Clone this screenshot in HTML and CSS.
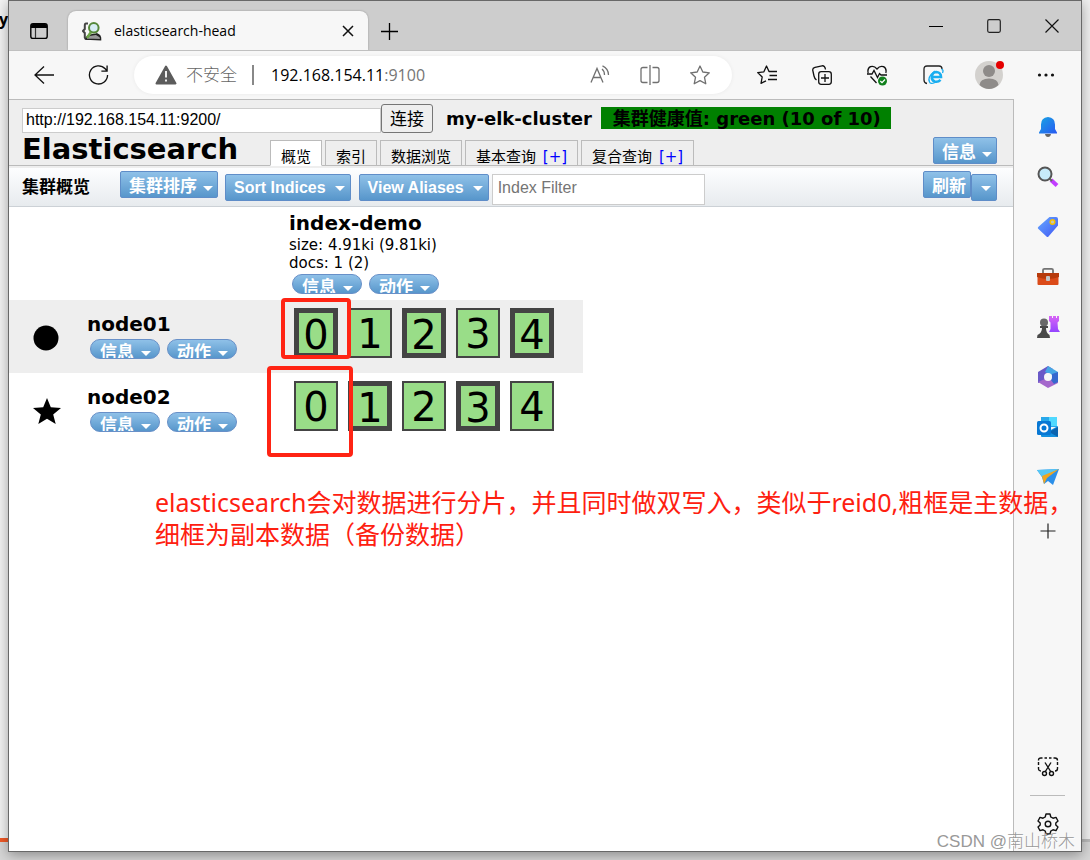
FILE: index.html
```html
<!DOCTYPE html>
<html lang="zh-CN">
<head>
<meta charset="utf-8">
<title>elasticsearch-head</title>
<link rel="stylesheet" href="styles.css">
</head>
<body>
<div class="desktop">
<span class="behind-text">y</span>
<div class="window">
  <header class="titlebar">
    <button class="icon-btn" aria-label="标签页操作"><svg width="20" height="20" viewBox="0 0 20 20" fill="none"><rect x="1.8" y="2.8" width="16.4" height="14.6" rx="2.2" stroke="#000" stroke-width="1.4"/><path d="M2 4.5Q2 3 4 3H16Q18 3 18 4.5V7H2Z" fill="#000"/><path d="M6.5 7v10" stroke="#333" stroke-width="1.2"/></svg></button>
    <div class="tab">
      <svg width="20" height="20" viewBox="0 0 20 20" fill="none"><path d="M6 2.500H4Q2.800 2.500 2.800 4.500V8L1 10L2.800 12V16.500Q3 18 4.500 18H7" stroke="#444" stroke-width="2"/><path d="M4 18.200Q4.500 14.500 9 14L15 13Q19 14.500 18.600 18.800Z" fill="#999" stroke="#222" stroke-width="1.400"/><path d="M14 13L18 15.500" stroke="#222" stroke-width="1.600"/><circle cx="11.800" cy="6.800" r="4.800" fill="#d7edf5" stroke="#55883a" stroke-width="2"/><path d="M9 11L5 17" stroke="#6ca447" stroke-width="2.600"/></svg>
      <span class="tab-title">elasticsearch-head</span>
      <button class="icon-btn" aria-label="关闭标签页"><svg width="12" height="12" viewBox="0 0 12 12"><path d="M1 1L11 11M11 1L1 11" stroke="#111" stroke-width="1.500"/></svg></button>
    </div>
    <button class="icon-btn" aria-label="新建标签页"><svg width="18" height="18" viewBox="0 0 18 18"><path d="M9.500 1V18M1 9.500H18" stroke="#000" stroke-width="1.300"/></svg></button>
    <div class="win-controls">
      <button aria-label="最小化"><svg width="14" height="14" viewBox="0 0 14 14"><path d="M0 7.500H14" stroke="#000"/></svg></button>
      <button aria-label="最大化"><svg width="14" height="14" viewBox="0 0 14 14"><rect x=".7" y=".7" width="12.600" height="12.600" rx="1.500" fill="none" stroke="#222" stroke-width="1.200"/></svg></button>
      <button aria-label="关闭"><svg width="14" height="14" viewBox="0 0 14 14"><path d="M.5 .5L13.500 13.500M13.500 .5L.5 13.500" stroke="#111" stroke-width="1.200"/></svg></button>
    </div>
  </header>

  <nav class="browser-bar">
    <div class="nav-group">
      <button class="icon-btn" aria-label="返回"><svg width="20" height="20" viewBox="0 0 20 20" fill="none" stroke="#111" stroke-width="1.300"><path d="M20 10H1M10 1.500L1 10L10 18.500"/></svg></button>
      <button class="icon-btn" aria-label="刷新页面"><svg width="21" height="22" viewBox="0 0 22 22" fill="none" stroke="#111" stroke-width="1.400"><path d="M20.500 11a9.500 9.500 0 1 1-2.500-6.500L20 6.800M20 1V7H14"/></svg></button>
    </div>
    <div class="omnibox">
      <svg width="22" height="20" viewBox="0 0 22 20"><path d="M11 1.500L20.500 18.500H1.500Z" fill="#5c5c5c" stroke="#5c5c5c" stroke-width="2" stroke-linejoin="round"/><path d="M11 6V12.500M11 14.500V16.500" stroke="#fff" stroke-width="1.800"/></svg>
      <span class="unsafe">不安全</span>
      <span class="address">192.168.154.11<span class="port">:9100</span></span>
      <div class="omni-icons">
        <button class="icon-btn" aria-label="大声朗读"><svg width="20" height="20" viewBox="0 0 20 20" fill="none" stroke="#707070" stroke-width="1.300"><path d="M1 17.500L7 3.500L13 17.500M3.500 12.500H10.500M12 4Q14.500 6 14.500 10M12.500 .8Q18.500 3.500 18.500 10"/></svg></button>
        <button class="icon-btn" aria-label="分屏"><svg width="20" height="20" viewBox="0 0 20 20" fill="none" stroke="#707070" stroke-width="1.300"><path d="M7.500 2.500H3Q1 2.500 1 4.500V15.500Q1 17.500 3 17.500H7.500M12.500 2.500H17Q19 2.500 19 4.500V15.500Q19 17.500 17 17.500H12.500M10 0V20"/></svg></button>
        <button class="icon-btn" aria-label="收藏此页"><svg width="20" height="20" viewBox="0 0 20 20" fill="none" stroke="#707070" stroke-width="1.300" stroke-linejoin="round"><path d="M10 1L12.800 7L19.300 7.800L14.500 12.300L15.800 18.800L10 15.600L4.200 18.800L5.500 12.300L.7 7.800L7.200 7Z"/></svg></button>
      </div>
    </div>
    <div class="action-group">
      <button class="icon-btn" aria-label="收藏夹"><svg width="20" height="20" viewBox="0 0 20 20" fill="none" stroke="#111" stroke-width="1.300"><path d="M13 6.500H12L9.500 1L6.900 6.800L.7 7.600L5.200 12L4 18.300L9 15.800M12.500 6.500H20M12.500 10.500H20M11 14.500H20" stroke-linejoin="round"/></svg></button>
      <button class="icon-btn" aria-label="集锦"><svg width="20" height="20" viewBox="0 0 20 20" fill="none" stroke="#111" stroke-width="1.300"><rect x="6.700" y="6.700" width="12.600" height="12.600" rx="2.500"/><path d="M13 9V17M9 13H17M4.500 15Q2.500 13.500 2 11L.8 5.500Q.3 3 3 2.300L10 .8Q12.800 .3 13.500 4.500"/></svg></button>
      <button class="icon-btn" aria-label="浏览器概要"><svg width="21" height="21" viewBox="0 0 21 21" fill="none" stroke="#111" stroke-width="1.300"><path d="M1.200 8Q0 3.500 3.500 1.700Q7 .3 10 4Q13 .3 16.500 1.700Q20 3.500 18.800 8M0 9H5L7 5.500L10.500 12.500L12.500 8.500L14 10H20M3.500 11.500L9.500 18"/><circle cx="15.500" cy="16" r="4.500" fill="#10801c" stroke="none"/><path d="M13.300 16L15 17.600L18 14.500" stroke="#fff"/></svg></button>
      <button class="icon-btn" aria-label="IE 模式"><svg width="21" height="20" viewBox="0 0 21 20" fill="none"><path d="M4 18.500Q1 18 1 15V4Q1 1 4 1H16Q19 1 19 4" stroke="#222" stroke-width="1.300"/><path d="M17.500 14.800Q15 17.500 11.500 16.500Q8.500 15 8.800 11.500Q9.500 7 13.500 7Q18 7.500 18 12H9" stroke="#1aaef0" stroke-width="2.600"/><path d="M18.500 4.500Q21 4.500 19.500 8M12 6Q4 12 6.500 17Q7.500 19.500 12 17.500" stroke="#1aaef0" stroke-width="1.300"/></svg></button>
      <button class="icon-btn avatar" aria-label="个人资料"><svg width="29" height="30" viewBox="0 0 29 30"><circle cx="14" cy="16" r="14" fill="#d3d1ce"/><circle cx="14" cy="12" r="6" fill="#8e8b89"/><path d="M4.500 26Q5 19.500 14 19.500Q23 19.500 23.500 26Q19 30 14 30Q9 30 4.500 26Z" fill="#8e8b89"/><circle cx="25" cy="6" r="4" fill="#e50000"/></svg></button>
      <button class="icon-btn" aria-label="更多"><svg width="20" height="20" viewBox="0 0 20 20" fill="#111"><circle cx="3.500" cy="10" r="1.600"/><circle cx="10" cy="10" r="1.600"/><circle cx="16.500" cy="10" r="1.600"/></svg></button>
    </div>
  </nav>

  <div class="body-row">
    <main class="page">
      <section class="app-header">
        <form class="connect" onsubmit="return false">
          <input class="url" type="text" aria-label="集群地址" value="http://192.168.154.11:9200/">
          <button class="connect-btn">连接</button>
          <strong class="cluster">my-elk-cluster</strong>
          <strong class="health">集群健康值: green (10 of 10)</strong>
        </form>
        <div class="tabs-row">
          <h1>Elasticsearch</h1>
          <div class="tabs">
            <button class="app-tab active">概览</button>
            <button class="app-tab">索引</button>
            <button class="app-tab">数据浏览</button>
            <button class="app-tab">基本查询 <span class="plus">[+]</span></button>
            <button class="app-tab">复合查询 <span class="plus">[+]</span></button>
          </div>
          <button class="btn info">信息<i class="caret"></i></button>
        </div>
      </section>
      <section class="toolbar">
        <h2>集群概览</h2>
        <button class="btn">集群排序<i class="caret"></i></button>
        <button class="btn low">Sort Indices<i class="caret"></i></button>
        <button class="btn low">View Aliases<i class="caret"></i></button>
        <input class="filter" type="text" aria-label="Index Filter" placeholder="Index Filter">
        <div class="refresh"><button class="btn">刷新</button><button class="btn low" aria-label="刷新选项"><i class="caret"></i></button></div>
      </section>
      <table class="cluster-table">
        <thead>
          <tr>
            <td></td><td></td>
            <th>
              <div class="name">index-demo</div>
              <div class="stat">size: 4.91ki (9.81ki)</div>
              <div class="stat">docs: 1 (2)</div>
              <div class="pills"><button class="pill">信息<i class="caret"></i></button><button class="pill">动作<i class="caret"></i></button></div>
            </th>
          </tr>
        </thead>
        <tbody>
          <tr class="shaded">
            <td class="mark"><svg width="26" height="26" viewBox="0 0 26 26"><circle cx="13" cy="13" r="12.500"/></svg></td>
            <td class="node"><div class="name">node01</div><div class="pills"><button class="pill">信息<i class="caret"></i></button><button class="pill">动作<i class="caret"></i></button></div></td>
            <td class="shard-cell"><div class="shards"><span class="shard primary">0</span><span class="shard">1</span><span class="shard primary">2</span><span class="shard">3</span><span class="shard primary">4</span></div></td>
          </tr>
          <tr>
            <td class="mark"><svg width="28" height="26" viewBox="0 0 28 26"><path d="M14 0L17.800 9.200L28 10L20.200 16.500L22.700 26L14 20.800L5.300 26L7.800 16.500L0 10L10.200 9.200Z"/></svg></td>
            <td class="node"><div class="name">node02</div><div class="pills"><button class="pill">信息<i class="caret"></i></button><button class="pill">动作<i class="caret"></i></button></div></td>
            <td class="shard-cell"><div class="shards"><span class="shard">0</span><span class="shard primary">1</span><span class="shard">2</span><span class="shard primary">3</span><span class="shard">4</span></div></td>
          </tr>
        </tbody>
      </table>
    </main>

    <aside class="sidebar">
      <button class="icon-btn" aria-label="通知"><svg width="22" height="22" viewBox="0 0 22 22"><defs><linearGradient id="bell" x2="1" y2="1"><stop stop-color="#18a5e3"/><stop offset="1" stop-color="#2858f2"/></linearGradient><linearGradient id="tag" x2="1" y2="1"><stop stop-color="#67aaff"/><stop offset="1" stop-color="#4057f4"/></linearGradient><linearGradient id="rook" x2="0" y2="1"><stop stop-color="#d865f5"/><stop offset="1" stop-color="#9445ff"/></linearGradient></defs><path d="M8 18H14Q13.500 21 11 21Q8.500 21 8 18Z" fill="#666"/><path d="M11 1Q18 1.500 18 8.500V13L20 16.500V17.500H2V16.500L4 13V8.500Q4 1.500 11 1Z" fill="url(#bell)"/></svg></button>
      <button class="icon-btn" aria-label="搜索"><svg width="22" height="22" viewBox="0 0 22 22"><path d="M14 14L20 19.500" stroke="#c23dff" stroke-width="4"/><path d="M12 12L15 15" stroke="#666" stroke-width="2"/><circle cx="8" cy="8" r="6.500" fill="#c7ebfa" stroke="#555" stroke-width="2"/></svg></button>
      <button class="icon-btn" aria-label="购物"><svg width="22" height="22" viewBox="0 0 22 22"><path d="M12.500 1H19Q21 1 21 3V9.500L11.500 20.500Q10.500 21.500 9.500 20.500L1.200 12.800Q.3 12 1.200 11Z" fill="url(#tag)"/><circle cx="15.500" cy="6" r="2.300" fill="#c9c8ad" stroke="#f6c000" stroke-width="1.500"/></svg></button>
      <button class="icon-btn" aria-label="工具"><svg width="24" height="22" viewBox="0 0 24 22"><path d="M7 8V4Q7 2.800 8.500 2.800H15.500Q17 2.800 17 4V8" fill="none" stroke="#737373" stroke-width="1.800"/><rect x="1.500" y="10" width="21" height="9" rx="1" fill="#db4b19"/><path d="M1 7H23V11Q12 15 1 11Z" fill="#b73b0c"/><rect x="10" y="10" width="4" height="5" rx="1" fill="#c2c5c7"/></svg></button>
      <button class="icon-btn" aria-label="游戏"><svg width="24" height="24" viewBox="0 0 24 24"><path d="M13 1H16V3H17V1H20V3H21V1H23V6L21.500 7.500L22 14L24 17H13L14.500 14V7.500L13 6Z" fill="url(#rook)"/><circle cx="8" cy="7.500" r="4" fill="#686868"/><path d="M4 11H12V13H10Q10 18 13.500 20L14 23H1L1.500 20Q6 18 6 13H4Z" fill="#494949"/></svg></button>
      <button class="icon-btn" aria-label="Microsoft 365"><svg width="22" height="22" viewBox="0 0 22 22"><path d="M1 6L11 0L16 3L9 8L8 15L1 17Z" fill="#6959c7"/><path d="M11 0L21 6V17L15 14V9L8 6Z" fill="#47a7e5"/><path d="M1 16L8 13L13 14L21 10V17L11 22Z" fill="#a568cc"/><path d="M15 8L21 6V16L17 18L14 14Z" fill="#3668ce"/><circle cx="11" cy="11" r="4" fill="#f7f7f7"/></svg></button>
      <button class="icon-btn" aria-label="Outlook"><svg width="22" height="22" viewBox="0 0 22 22"><rect x="4" y="1" width="16" height="10" fill="#28a8ea"/><path d="M12 1H20V10H12Z" fill="#50d9ff"/><path d="M4 10L12 15L21 10V20Q21 21 20 21H5Q4 21 4 20Z" fill="#1490df"/><path d="M21 11V21L12 16Z" fill="#0b63af"/><rect x="0" y="5" width="14" height="14" rx="1.500" fill="#0878d4"/><circle cx="7" cy="12" r="3.500" fill="none" stroke="#fff" stroke-width="2"/></svg></button>
      <button class="icon-btn" aria-label="Drop"><svg width="22" height="22" viewBox="0 0 22 22"><path d="M0 4L22 3L16 19L11 15L7 18L5 11Z" fill="#2b8fe9"/><path d="M0 4L22 3L5 11Z" fill="#55c7f5"/><path d="M22 3L5 10L7 18L10 12Z" fill="#efa622"/></svg></button>
      <button class="icon-btn add" aria-label="添加"><svg width="16" height="16" viewBox="0 0 16 16"><path d="M8 .5V15.500M.5 8H15.500" stroke="#222" stroke-width="1.200"/></svg></button>
      <div class="side-bottom">
        <button class="icon-btn" aria-label="网页捕获"><svg width="22" height="22" viewBox="0 0 22 22" fill="none" stroke="#111" stroke-width="1.400"><path d="M4 15Q1.500 15 1.500 12.500V11M1.500 9V6M1.500 4.500Q1.500 2 4 2H5.500M7.500 2H10M12 2H14.500M16.500 2H18Q20.500 2 20.500 4.500M20.500 6V9M20.500 11V12.500Q20.500 15 18 15"/><path d="M8 6.500L14 16M14 6.500L8 16"/><circle cx="7.500" cy="17.500" r="2"/><circle cx="14.500" cy="17.500" r="2"/></svg></button>
        <hr>
        <button class="icon-btn" aria-label="设置"><svg width="22" height="22" viewBox="0 0 22 22" fill="none" stroke="#111" stroke-width="1.400" stroke-linejoin="round"><path d="M9 1H13L13.800 4L16 5.200L19 4.400L21 8L18.800 10V12L21 14L19 17.600L16 16.800L13.800 18L13 21H9L8.200 18L6 16.800L3 17.600L1 14L3.200 12V10L1 8L3 4.400L6 5.200L8.200 4Z"/><circle cx="11" cy="11" r="2.800"/></svg></button>
      </div>
    </aside>
  </div>

  <div class="mark-box first"></div>
  <div class="mark-box second"></div>
  <p class="note">elasticsearch会对数据进行分片，并且同时做双写入，类似于reid0,粗框是主数据，<br>细框为副本数据（备份数据）</p>
  <span class="watermark">CSDN @南山桥木</span>
</div>
</div>
</body>
</html>
```
FILE: styles.css
```css
* { box-sizing: border-box; }
body { margin: 0; font-family: "Open Sans", "Noto Sans CJK SC", sans-serif; color: #000; }
button { font: inherit; color: inherit; cursor: pointer; }
svg { display: block; flex: none; }
h1, h2, p { margin: 0; }

.desktop {
  position: relative;
  display: flex;
  min-height: 100vh;
  padding: 0 8px 8px;
  overflow: hidden;
  background: linear-gradient(to top, #d6d6d6 18px, #f05a28 18px, #f05a28 22px, #f3f3f3 22px) left / 20px 100% no-repeat,
    linear-gradient(to top, #d6d6d6 18px, #bbb 18px, #bbb 21px, #f0f0f0 21px);
}
.behind-text { position: absolute; left: -1px; top: 8px; font-weight: 700; font-size: 16px; line-height: 22px; }
.window {
  position: relative;
  flex: 1;
  min-width: 0;
  display: flex;
  flex-direction: column;
  border: 1px solid #686868;
  background: #f7f7f7;
  box-shadow: 0 3px 12px rgba(0, 0, 0, .35);
}
.icon-btn { display: flex; align-items: center; justify-content: center; padding: 0; border: 0; background: none; }

/* Browser chrome */
.titlebar { display: flex; align-items: center; height: 50px; padding-left: 20px; background: #cdcdcd; border-bottom: 1px solid #c0c0c0; }
.titlebar > .icon-btn { padding-top: 10px; }
.tab {
  display: flex;
  align-items: center;
  align-self: flex-end;
  gap: 12px;
  width: 300px;
  height: 39px;
  margin: 0 12px 0 19px;
  padding: 0 14px;
  border-radius: 8px 8px 0 0;
  background: #f7f7f7;
  box-shadow: 0 0 2px rgba(0, 0, 0, .3);
  clip-path: inset(-3px -3px 0);
}
.tab-title { flex: 1; font-size: 14px; line-height: 20px; }
.win-controls { display: flex; align-self: stretch; margin-left: auto; }
.win-controls button { display: grid; place-items: center; width: 58px; padding: 0; border: 0; background: none; }
.browser-bar { display: flex; align-items: center; gap: 25px; height: 48px; padding: 0 25px; }
.nav-group { display: flex; gap: 34px; }
.omnibox {
  flex: 1;
  display: flex;
  align-items: center;
  height: 38px;
  padding: 0 22px 0 21px;
  border-radius: 19px;
  background: #fff;
  box-shadow: 0 0 4px rgba(0, 0, 0, .06);
  font-size: 17px;
  white-space: nowrap;
}
.unsafe { margin-left: 9px; padding-right: 15px; border-right: 2px solid #888; color: #666; line-height: 20px; font-weight: 300; }
.address { margin-left: 17px; font-size: 16px; }
.port { color: #767676; }
.omni-icons { display: flex; gap: 30px; margin-left: auto; }
.action-group { display: flex; align-items: center; gap: 35px; }
.avatar { margin: -2px -3px 0 -4px; }

.body-row { flex: 1; display: flex; }
.page { flex: 1; min-width: 0; border-top: 1px solid #bbb; border-right: 1px solid #bbb; background: #fff; font-family: "DejaVu Sans", "Noto Sans CJK SC", sans-serif; }

/* Application header */
.app-header { display: flex; flex-direction: column; height: 68px; padding: 4px 16px 2px 13px; background: linear-gradient(#bbb, #bbb) left bottom 2px / 100% 1px no-repeat #eee; }
.connect { display: flex; align-items: flex-end; height: 29px; }
.url { width: 359px; height: 25px; padding: 0 4px 2px 3px; border: 1px solid #ccc; background: #fff; font: 16px "Liberation Sans", sans-serif; }
.connect-btn { width: 52px; height: 29px; padding: 0; border: 1px solid #767676; border-radius: 3px; background: #efefef; font-size: 17px; line-height: 24px; }
.cluster { margin: 0 9px 3px 13px; font-size: 18px; line-height: 22px; }
.health { margin-bottom: 4px; padding: 2px 10px 0 12px; background: #008000; font-size: 18px; line-height: 20px; white-space: nowrap; }
.tabs-row { display: flex; align-items: flex-end; height: 33px; }
h1 { width: 248px; font-size: 29px; line-height: 33px; }
.tabs { display: flex; gap: 3px; }
.app-tab { height: 26px; padding: 7px 10px 0; border: 1px solid #bbb; background: #eee; font-size: 15px; line-height: 18px; white-space: nowrap; }
.app-tab.active { background: #fff; border-bottom-color: #fff; }
.plus { margin-left: 2px; color: #00f; }

.btn {
  display: flex;
  align-items: center;
  gap: 6px;
  height: 27px;
  padding: 5px 4px 0 8px;
  border: 1px solid #5f8dc8;
  border-radius: 2px;
  background: linear-gradient(#8fc1e8, #5796cb);
  color: #fff;
  font: bold 17px/20px "Liberation Sans", "Noto Sans CJK SC", sans-serif;
  white-space: nowrap;
}
.info { margin: 0 0 2px auto; }
.caret { width: 0; height: 0; margin-top: 2px; border: 5px solid transparent; border-top-color: #fff; border-bottom: 0; }
.toolbar { display: flex; align-items: flex-start; height: 39px; padding: 3px 16px 0 13px; border-bottom: 1px solid #ccd1d6; background: linear-gradient(#fdfeff, #e7ebee); }
h2 { width: 98px; font-size: 17px; line-height: 32px; }
.low { gap: 9px; margin: 3px 0 0 7px; padding: 0 5px 0 8px; font-size: 16px; }
.low + .low { margin-left: 8px; }
.filter { width: 213px; height: 31px; margin: 3px 0 0 3px; padding: 0 5px 4px; border: 1px solid #ccc; background: #fff; font: 16px "Liberation Sans", sans-serif; }
.refresh { display: flex; margin-left: auto; }
.refresh .low { margin-left: 0; padding-left: 9px; }

/* Cluster table */
.cluster-table { border-collapse: collapse; }
.cluster-table td, .cluster-table th { padding: 0; vertical-align: top; text-align: left; font-weight: 400; }
.cluster-table thead th { height: 93px; padding: 4px 0 0 4px; }
.shaded { background: #eee; }
.cluster-table .mark { width: 77px; padding: 25px 0 0 24px; }
.cluster-table .node { width: 199px; height: 73px; padding: 12px 0 0 1px; }
.name { font-size: 20px; font-weight: 700; line-height: 25px; }
.stat { font-size: 15px; line-height: 18px; }
.pills { display: flex; gap: 7px; padding: 2px 0 0 3px; }
.pill {
  display: flex;
  gap: 7px;
  width: 70px;
  height: 20px;
  padding: 0 9px;
  overflow: hidden;
  border: 1px solid #6890c8;
  border-radius: 10px;
  background: linear-gradient(#8fc1e8, #5796cb);
  color: #fff;
  font: bold 17px/26px "Liberation Sans", "Noto Sans CJK SC", sans-serif;
  white-space: nowrap;
}
.pill .caret { margin-top: 11px; }
.shards { display: flex; gap: 10px; padding: 8px 29px 0 9px; }
.shard { width: 44px; height: 50px; border: 2px solid #444; background: #9d8; font-size: 40px; line-height: 48px; text-align: center; }
.shard.primary { border-width: 5px; line-height: 44px; }

/* Side panel */
.sidebar { display: flex; flex-direction: column; align-items: center; gap: 28px; width: 67px; padding: 17px 0 16px; background: #f7f7f7; }
.sidebar .icon-btn { height: 22px; }
.sidebar .add { margin-top: 4px; }
.side-bottom { display: flex; flex-direction: column; align-items: center; gap: 17px; margin-top: auto; }
hr { width: 35px; height: 1px; margin: 0; border: 0; background: #bbb; }

/* Annotations over the window */
.mark-box { position: absolute; border: 4px solid #ff2414; border-radius: 4px; }
.first { left: 272px; top: 297px; width: 70px; height: 61px; }
.second { left: 258px; top: 365px; width: 86px; height: 91px; }
.note { position: absolute; left: 146px; top: 485px; color: #fe2010; font: 25px/32px "Noto Sans", "Noto Sans CJK SC", sans-serif; white-space: nowrap; }
.watermark { position: absolute; right: 6px; bottom: -3px; color: #999; font: 300 17px/24px "Liberation Sans", "Noto Sans CJK SC", sans-serif; text-shadow: 1px 1px #fff; white-space: nowrap; }
```
